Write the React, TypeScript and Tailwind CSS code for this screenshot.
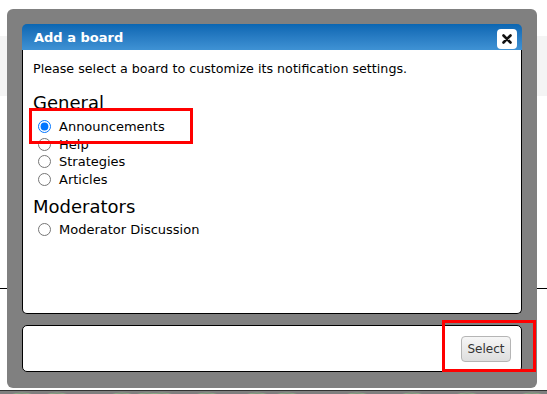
import React from "react";

const boards = [
  { group: "General", items: ["Announcements", "Help", "Strategies", "Articles"] },
  { group: "Moderators", items: ["Moderator Discussion"] },
];

function CloseIcon() {
  return (
    <svg width="10" height="10" viewBox="0 0 10 10">
      <path d="M1.5 1.5 L8.5 8.5 M8.5 1.5 L1.5 8.5" stroke="#111" strokeWidth="2.6" strokeLinecap="round" />
    </svg>
  );
}

function GreenStrip() {
  return (
    <svg width="547" height="4" viewBox="0 0 547 4" className="block">
      <rect width="547" height="4" fill="#7f7f7f" />
      {[10, 45, 110, 135, 150, 195, 245, 275, 345, 400, 455, 520].map((x, i) => (
        <path key={i} d={`M${x} 4 Q${x + 12} 0 ${x + 24} 4`} stroke="#8cbf86" strokeOpacity="0.6" strokeWidth="1" fill="none" />
      ))}
    </svg>
  );
}

export default function App(): JSX.Element {
  return (
    <div
      className="relative w-[547px] h-[394px] overflow-hidden bg-white"
      style={{ fontFamily: '"DejaVu Sans", Verdana, sans-serif' }}
    >
      {/* page behind the dialog */}
      <div className="h-[36px]" />
      <div className="h-[60px] bg-[#f4f4f4]" />
      <div className="h-[192px]" />
      <div className="h-px bg-black" />
      <div className="h-[101px]" />
      <div className="h-px bg-[#333]" />
      <GreenStrip />

      {/* modal */}
      <div className="absolute left-[7px] top-[9px] w-[530px] h-[379px] rounded-[6px] bg-[#808080] pt-[15px] pl-[15px]">
        <div className="w-[500px] flex flex-col">
          <div className="h-[26px] rounded-t-[5px] bg-linear-to-b from-[#0a66b2] to-[#3f92d4] flex items-center justify-between pl-[12px] pr-[5px]">
            <span className="text-white font-bold text-[13px] pt-[2px]">Add a board</span>
            <div className="w-[20px] h-[20px] mt-[3px] bg-white rounded-[4px] flex items-center justify-center">
              <CloseIcon />
            </div>
          </div>

          <div className="h-[264px] bg-white border-x border-b border-black rounded-b-[5px] pl-[10px] text-black">
            <p className="pt-[11px] text-[12.7px] leading-[16px]">
              Please select a board to customize its notification settings.
            </p>
            {boards.map((b, gi) => (
              <div key={b.group} className={gi === 0 ? "mt-[15px]" : "mt-[8px]"}>
                <div className={"text-[18px] leading-[22px] " + (gi === 0 ? "mb-[4px]" : "mb-[3px]")}>{b.group}</div>
                {b.items.map((item, i) => (
                  <label key={item} className="flex items-center h-[17.5px] text-[13px]">
                    <input
                      type="radio"
                      name="board"
                      defaultChecked={gi === 0 && i === 0}
                      className="m-0 ml-[5px] w-[13px] h-[13px]"
                    />
                    <span className="ml-[8px]">{item}</span>
                  </label>
                ))}
              </div>
            ))}
          </div>

          <div className="mt-[11px] h-[47px] bg-white border border-black rounded-[5px] flex justify-end items-start pt-[10px] pr-[10px]">
            <button className="w-[50px] h-[26px] rounded-[4px] border border-[#b5b5b5] bg-linear-to-b from-[#f6f6f6] to-[#dedede] text-[12px] text-[#333]">
              Select
            </button>
          </div>
        </div>
      </div>

      {/* red highlight boxes */}
      <div className="absolute left-[29px] top-[108px] w-[164px] h-[36px] border-[3px] border-[#ff0000]" />
      <div className="absolute left-[442px] top-[320px] w-[94px] h-[52px] border-[3px] border-[#ff0000]" />
    </div>
  );
}
